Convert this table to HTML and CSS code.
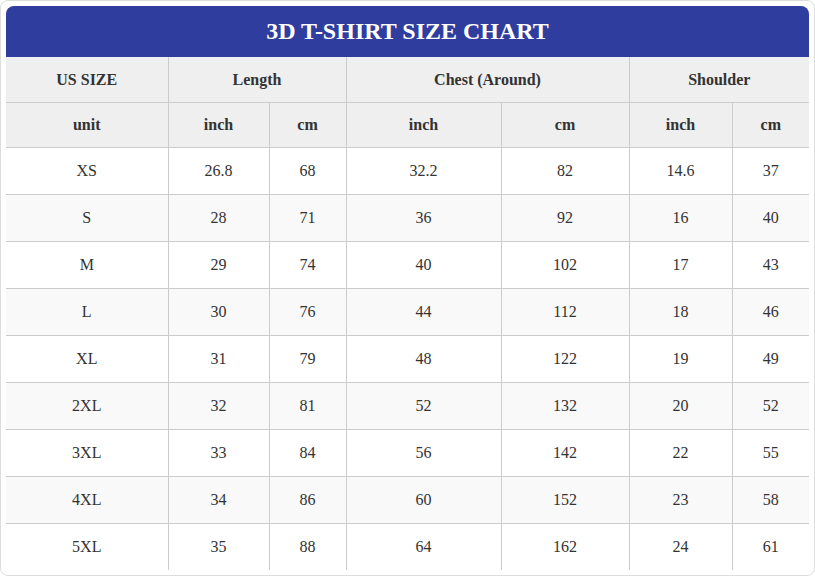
FILE: index.html
```html
<!DOCTYPE html>
<html>
<head>
<meta charset="utf-8">
<link rel="stylesheet" href="styles.css">
</head>
<body>
<div class="card">
  <div class="title">3D T-SHIRT SIZE CHART</div>
  <table class="chart">
    <colgroup>
      <col class="c1"><col class="c2"><col class="c3"><col class="c4"><col class="c5"><col class="c6"><col class="c7">
    </colgroup>
    <thead>
      <tr class="group-row"><th>US SIZE</th><th colspan="2">Length</th><th colspan="2">Chest (Around)</th><th colspan="2">Shoulder</th></tr>
      <tr><th>unit</th><th>inch</th><th>cm</th><th>inch</th><th>cm</th><th>inch</th><th>cm</th></tr>
    </thead>
    <tbody>
      <tr><td>XS</td><td>26.8</td><td>68</td><td>32.2</td><td>82</td><td>14.6</td><td>37</td></tr>
      <tr><td>S</td><td>28</td><td>71</td><td>36</td><td>92</td><td>16</td><td>40</td></tr>
      <tr><td>M</td><td>29</td><td>74</td><td>40</td><td>102</td><td>17</td><td>43</td></tr>
      <tr><td>L</td><td>30</td><td>76</td><td>44</td><td>112</td><td>18</td><td>46</td></tr>
      <tr><td>XL</td><td>31</td><td>79</td><td>48</td><td>122</td><td>19</td><td>49</td></tr>
      <tr><td>2XL</td><td>32</td><td>81</td><td>52</td><td>132</td><td>20</td><td>52</td></tr>
      <tr><td>3XL</td><td>33</td><td>84</td><td>56</td><td>142</td><td>22</td><td>55</td></tr>
      <tr><td>4XL</td><td>34</td><td>86</td><td>60</td><td>152</td><td>23</td><td>58</td></tr>
      <tr><td>5XL</td><td>35</td><td>88</td><td>64</td><td>162</td><td>24</td><td>61</td></tr>
    </tbody>
  </table>
</div>
</body>
</html>
```
FILE: styles.css
```css
html, body {
  margin: 0;
  padding: 0;
  background: #ffffff;
}
body {
  font-family: "Times New Roman", "Liberation Serif", serif;
  color: #333333;
}
.card {
  box-sizing: border-box;
  width: 815px;
  height: 576px;
  border: 1px solid #dddddd;
  border-radius: 8px;
  padding: 5px;
  overflow: hidden;
}
.title {
  height: 51px;
  background: #2f3d9e;
  color: #ffffff;
  border-radius: 8px 8px 0 0;
  font-weight: bold;
  font-size: 24px;
  display: flex;
  align-items: center;
  justify-content: center;
}
.chart {
  width: 803px;
  border-collapse: collapse;
  border-style: hidden;
  table-layout: fixed;
  font-family: "Times New Roman", "Liberation Serif", serif;
}
.c1 { width: 162px; }
.c2 { width: 101px; }
.c3 { width: 77px; }
.c4 { width: 155px; }
.c5 { width: 128px; }
.c6 { width: 103px; }
.c7 { width: 77px; }
.chart th,
.chart td {
  border: 1px solid #cccccc;
  text-align: center;
  padding: 0;
  font-family: "Times New Roman", "Liberation Serif", serif;
}
.chart th {
  height: 44px;
  background: #efefef;
  font-size: 16px;
  font-weight: bold;
  color: #333333;
}
.chart .group-row th {
  height: 45px;
}
.chart td {
  height: 46px;
  font-size: 16px;
  color: #333333;
}
.chart tbody tr:nth-child(even) td {
  background: #f9f9f9;
}
```
